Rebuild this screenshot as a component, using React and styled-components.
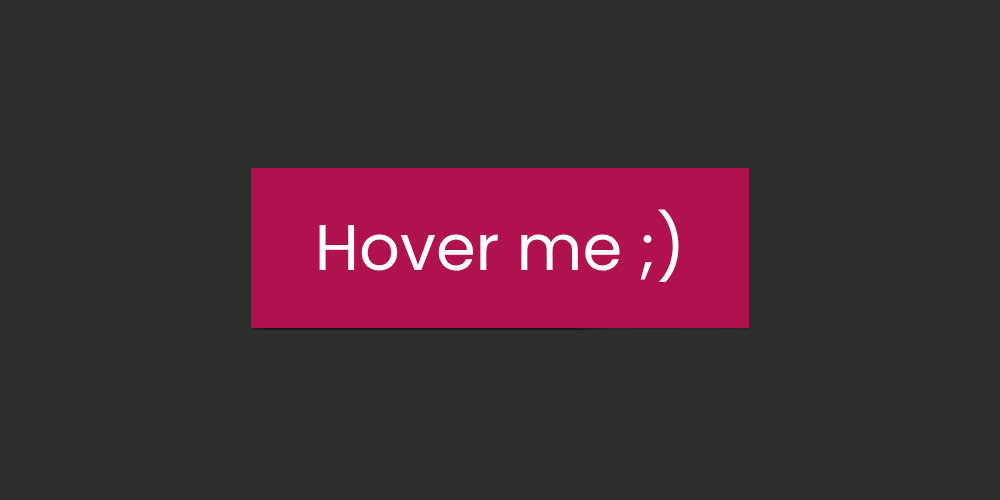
import React from "react";
import styled, { createGlobalStyle } from "styled-components";

const Color = {
  background: "#2e2e2e",
  pink: "#b0124f",
  white: "#ffffff"
};

const GlobalStyle = createGlobalStyle`
  * {
    box-sizing: border-box;
  }

  body {
    margin: 0;
    background-color: ${Color.background};
  }
`;

export const Container = styled.main`
  display: flex;
  justify-content: center;
  align-items: center;
  min-height: 100vh;
  padding-bottom: 4px;
`;

export const HoverButton = styled.button`
  position: relative;
  padding: 32px 64px;
  border: none;
  background-color: ${Color.pink};
  color: ${Color.white};
  font-family: Poppins, Lato, "Open Sans", sans-serif;
  font-size: 64px;
  line-height: 96px;
  white-space: nowrap;
  cursor: pointer;

  /* thin shadow under the button, fades out to the right */
  &::after {
    content: "";
    position: absolute;
    top: 100%;
    left: 0;
    width: 100%;
    height: 2px;
    background: linear-gradient(
      to right,
      #272727,
      #191919 3%,
      #191919 66%,
      #262626 71%,
      #282828
    );
  }

  &:hover {
    background-color: #d01860;
  }
`;

function App() {
  return (
    <>
      <GlobalStyle />
      <Container>
        <HoverButton type="button">Hover me ;)</HoverButton>
      </Container>
    </>
  );
}

export default App;
